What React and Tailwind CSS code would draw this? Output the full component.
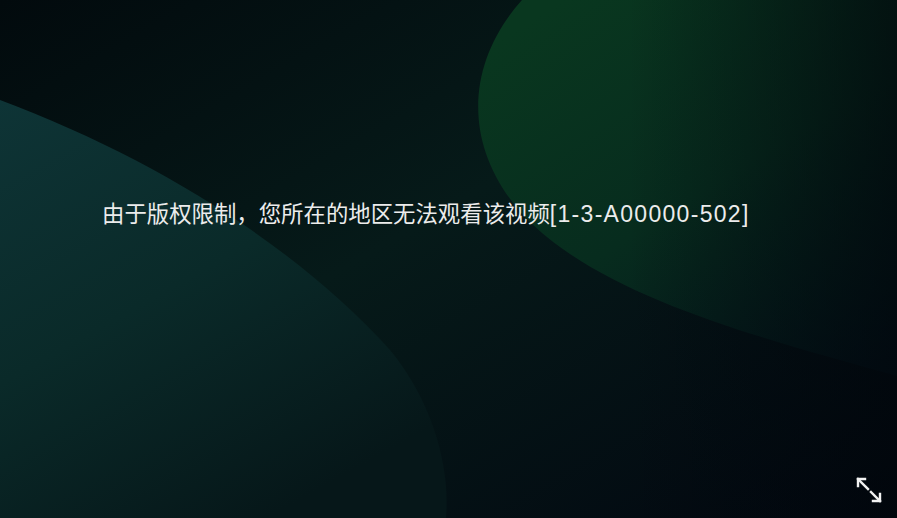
import React from 'react';

const Backdrop = () => (
  <svg className="absolute inset-0 h-full w-full" viewBox="0 0 897 518" preserveAspectRatio="none">
    <defs>
      <linearGradient id="base" x1="0" y1="0" x2="1" y2="1">
        <stop offset="0" stopColor="#020a0d" />
        <stop offset="0.45" stopColor="#061a19" />
        <stop offset="1" stopColor="#020710" />
      </linearGradient>
      <linearGradient id="blobRight" x1="0.2" y1="0" x2="0.9" y2="1">
        <stop offset="0" stopColor="#09371f" />
        <stop offset="0.5" stopColor="#072c1e" />
        <stop offset="1" stopColor="#03121a" />
      </linearGradient>
      <linearGradient id="blobLeft" x1="0" y1="0" x2="0.6" y2="1">
        <stop offset="0" stopColor="#0e3436" />
        <stop offset="0.5" stopColor="#0a2a29" />
        <stop offset="1" stopColor="#061719" />
      </linearGradient>
      <linearGradient id="fadeRight" x1="0" y1="0" x2="1" y2="0">
        <stop offset="0.7" stopColor="#01060b" stopOpacity="0" />
        <stop offset="1" stopColor="#01060b" stopOpacity="0.7" />
      </linearGradient>
    </defs>
    <rect width="897" height="518" fill="url(#base)" />
    <path d="M0 100 C160 160 300 250 390 350 C435 405 450 470 446 518 L0 518 Z" fill="url(#blobLeft)" />
    <path d="M522 0 C468 60 458 145 526 218 C606 300 770 340 897 376 L897 0 Z" fill="url(#blobRight)" />
    <rect width="897" height="518" fill="url(#fadeRight)" />
  </svg>
);

const ExpandIcon = () => (
  <svg width="32" height="32" viewBox="0 0 32 32" fill="none" stroke="#f2f2f2" strokeWidth="2.4" strokeLinecap="square">
    <path d="M5 5 L15 15" />
    <path d="M5 12 L5 5 L12 5" />
    <path d="M18 18 L27 27" />
    <path d="M20 27 L27 27 L27 20" />
  </svg>
);

export default function App() {
  return (
    <div className="relative h-[518px] w-[897px] overflow-hidden bg-[#041214]">
      <Backdrop />
      <div className="relative pl-[102px] pt-[198px]">
        <p
          className="whitespace-nowrap text-[22.4px] leading-[28px] text-[#ececec]"
          style={{ fontFamily: '"Noto Sans CJK SC", "Noto Sans", sans-serif' }}
        >
          由于版权限制，您所在的地区无法观看该视频
          <span
            className="text-[23px] tracking-[1.3px]"
            style={{ fontFamily: '"Liberation Sans", Arial, sans-serif' }}
          >
            [1-3-A00000-502]
          </span>
        </p>
      </div>
      <button className="absolute bottom-[12px] right-[12px] p-0">
        <ExpandIcon />
      </button>
    </div>
  );
}
